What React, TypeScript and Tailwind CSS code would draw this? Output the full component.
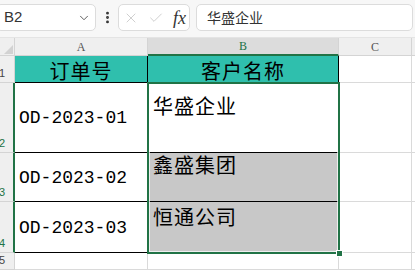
import React from 'react';
import { ChevronDown, EllipsisVertical, X, Check } from 'lucide-react';

const cjk = "font-['Noto_Sans_CJK_SC',sans-serif]";

// grid rows: header, 1..5
const rows = [
  { n: '1', h: 'h-[27px]', sel: false },
  { n: '2', h: 'h-[70px]', sel: true },
  { n: '3', h: 'h-[49px]', sel: true },
  { n: '4', h: 'h-[51px]', sel: true },
  { n: '5', h: 'h-[17px]', sel: false },
];

const orders = ['OD-2023-01', 'OD-2023-02', 'OD-2023-03'];
const customers = [
  { name: '华盛企业', bg: 'bg-white', pad: 'pt-[12px]' },
  { name: '鑫盛集团', bg: 'bg-[#c8c8c8]', pad: 'pt-[1px]' },
  { name: '恒通公司', bg: 'bg-[#c8c8c8]', pad: 'pt-[4px]' },
];

function Toolbar() {
  return (
    <div className="h-[38px] flex items-start pt-[4px] bg-[#f7f7f7] border-b border-[#e4e4e4]">
      <div className="w-[100px] -ml-[4px] h-[27px] bg-white border border-[#dcdcdc] rounded-[5px] flex items-center justify-between pl-[7px] pr-[4px]">
        <span className="text-[15px] text-[#333] font-['Liberation_Sans',sans-serif]">B2</span>
        <ChevronDown size={14} strokeWidth={1.6} className="text-[#555]" />
      </div>
      <div className="w-[22px] h-[27px] flex items-center justify-center">
        <EllipsisVertical size={15} strokeWidth={2.6} className="text-[#333]" />
      </div>
      <div className="w-[72px] h-[27px] bg-white border border-[#dcdcdc] rounded-[5px] flex items-center pl-[4px] gap-[9px]">
        <X size={16} strokeWidth={1.1} className="text-[#bdbdbd]" />
        <Check size={16} strokeWidth={1.1} className="text-[#bdbdbd]" />
        <span className="italic text-[18px] text-[#333] font-['Liberation_Serif',serif] leading-none">fx</span>
      </div>
      <div className="ml-[6px] flex-1 mr-[2px] h-[27px] bg-white border border-[#dcdcdc] rounded-[5px] flex items-center pl-[10px]">
        <span className={`text-[14px] text-[#333] ${cjk}`}>华盛企业</span>
      </div>
    </div>
  );
}

function Sheet() {
  return (
    <div className="relative grid grid-cols-[15px_133px_191px_73px_3px] bg-white">
      {/* column header row */}
      <div className="h-[18px] bg-[#efefef] border-r border-b border-[#d4d4d4] relative">
        <div className="absolute right-[1px] bottom-[1px] w-0 h-0 border-l-[9px] border-l-transparent border-b-[9px] border-b-[#d2d2d2]" />
      </div>
      <div className="h-[18px] bg-[#efefef] border-r border-b border-[#d4d4d4] flex items-center justify-center text-[12px] text-[#555] font-['Liberation_Serif',serif]">A</div>
      <div className="h-[18px] bg-[#dcdcdc] border-r border-[#d4d4d4] border-b-2 border-b-[#217346] flex items-center justify-center text-[12px] text-[#217346] font-['Liberation_Serif',serif]">B</div>
      <div className="h-[18px] bg-[#efefef] border-r border-b border-[#d4d4d4] flex items-center justify-center text-[12px] text-[#555] font-['Liberation_Serif',serif]">C</div>
      <div className="h-[18px] bg-[#efefef] border-b border-[#d4d4d4]" />

      {rows.map((r, i) => (
        <React.Fragment key={r.n}>
          <div
            className={`${r.h} bg-[#efefef] border-b border-[#d4d4d4] flex items-end pb-[1px] -ml-[1px] text-[11px] font-['Liberation_Sans',sans-serif] ${
              r.sel ? 'border-r-2 border-r-[#217346] text-[#217346]' : 'border-r border-r-[#d4d4d4] text-[#444]'
            }`}
          >
            {r.n}
          </div>
          {i === 0 && (
            <>
              <div className={`${r.h} bg-[#2fbfad] border-r border-b border-black flex items-center justify-center pt-[3px] text-[20px] tracking-[1px] text-black ${cjk}`}>订单号</div>
              <div className={`${r.h} bg-[#2fbfad] border-r border-b border-black flex items-center justify-center pt-[3px] text-[20px] tracking-[1px] text-black ${cjk}`}>客户名称</div>
            </>
          )}
          {i >= 1 && i <= 3 && (
            <>
              <div className={`${r.h} bg-white border-r border-b border-black flex items-center pl-[4px] pt-[2px] text-[18px] text-black font-['Liberation_Mono',monospace]`}>
                {orders[i - 1]}
              </div>
              <div className={`${r.h} ${customers[i - 1].bg} border-r border-b border-black ${customers[i - 1].pad} pl-[5px] text-[20px] leading-[22px] tracking-[1px] text-black ${cjk}`}>
                {customers[i - 1].name}
              </div>
            </>
          )}
          {i === 4 && (
            <>
              <div className={`${r.h} border-r border-b border-[#dadada]`} />
              <div className={`${r.h} border-r border-b border-[#dadada]`} />
            </>
          )}
          <div className={`${r.h} border-r border-b border-[#dadada]`} />
          <div className={`${r.h} border-b border-[#dadada]`} />
        </React.Fragment>
      ))}

      {/* selection B2:B4 */}
      <div className="absolute left-[147px] top-[44px] w-[193px] h-[172px] border-2 border-[#217346] pointer-events-none">
        <div className="absolute inset-0 border border-white/70" />
      </div>
      <div className="absolute left-[336px] top-[212px] w-[7px] h-[7px] bg-[#217346] border border-white" />
    </div>
  );
}

export default function App() {
  return (
    <div className="w-[415px] h-[270px] overflow-hidden bg-white font-['Liberation_Sans',sans-serif]">
      <Toolbar />
      <Sheet />
    </div>
  );
}
